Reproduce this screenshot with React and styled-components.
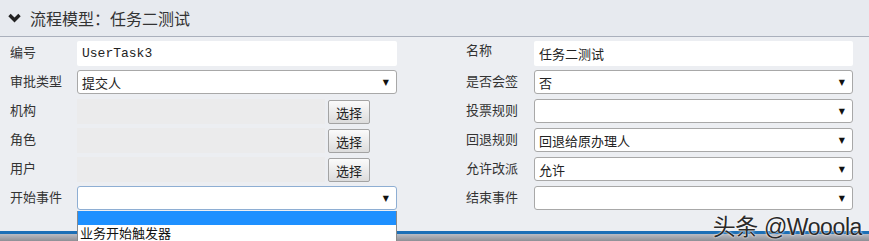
import React from "react";
import styled, { createGlobalStyle } from "styled-components";

const Global = createGlobalStyle`
  html, body { margin: 0; padding: 0; }
  body {
    background: #eceef2;
    font-family: "Noto Sans CJK SC", "Noto Sans", sans-serif;
    color: #222;
  }
`;

const Page = styled.div`
  position: relative;
  width: 869px;
  height: 241px;
  overflow: hidden;
  display: flex;
  flex-direction: column;
`;

const Header = styled.div`
  height: 37px;
  flex: none;
  box-sizing: border-box;
  background: #e7eaef;
  border-bottom: 1px solid #aab0bc;
  display: flex;
  align-items: center;
  padding-left: 8px;
  gap: 9px;
`;

const Title = styled.span`
  font-size: 16px;
  color: #333;
`;

const Body = styled.div`
  flex: 1;
  background: #eceef2;
  padding: 4px 16px 0 10px;
  display: grid;
  grid-template-columns: 387px 387px;
  column-gap: 69px;
  align-content: start;
`;

const Column = styled.div`
  display: flex;
  flex-direction: column;
  gap: 4px;
`;

const Row = styled.div`
  display: grid;
  grid-template-columns: ${(p) => p.$label}px 1fr;
  height: 25px;
  align-items: start;
  position: relative;
`;

const Label = styled.span`
  font-size: 13px;
  line-height: 16px;
  padding-top: ${(p) => p.$top ?? 3}px;
  color: #333;
`;

const TextInput = styled.div`
  height: 25px;
  box-sizing: border-box;
  background: #fff;
  border-radius: 2px;
  padding: 0 5px;
  display: flex;
  align-items: center;
  font-size: 13px;
  font-family: ${(p) => (p.$mono ? '"Liberation Mono", monospace' : '"Noto Sans CJK SC", sans-serif')};
  color: #222;
`;

const Select = styled.div`
  height: 24px;
  box-sizing: border-box;
  background: #fff;
  border: 1px solid ${(p) => (p.$focus ? "#8eaed3" : "#a8a8a8")};
  border-radius: 3px;
  padding: 0 7px 0 4px;
  display: flex;
  align-items: center;
  justify-content: space-between;
  font-size: 13px;
  color: #222;
`;

const Arrow = styled.span`
  font-size: 8px;
  color: #111;
  font-family: "DejaVu Sans", sans-serif;
`;

const PickerField = styled.div`
  display: flex;
  align-items: flex-start;
  gap: 3px;
`;

const Disabled = styled.div`
  width: 248px;
  height: 25px;
  background: #ebebec;
`;

const Button = styled.button`
  width: 42px;
  height: 24px;
  margin-top: 1px;
  box-sizing: border-box;
  border: 1px solid #a3a3a3;
  border-radius: 2px;
  background: linear-gradient(#fbfbfb, #dcdcdc);
  font-family: "Noto Sans CJK SC", sans-serif;
  font-size: 13px;
  color: #222;
  padding: 0;
`;

const Dropdown = styled.div`
  position: absolute;
  left: 67px;
  top: 25px;
  width: 320px;
  box-sizing: border-box;
  background: #fff;
  border: 1px solid #8a8a8a;
  border-top: none;
  z-index: 5;
`;

const Option = styled.div`
  height: ${(p) => p.$h}px;
  background: ${(p) => (p.$active ? "#1e90ff" : "#fff")};
  font-size: 13px;
  line-height: 15px;
  padding-left: 2px;
  color: #111;
`;

const Footer = styled.div`
  flex: none;
  height: 10px;
  display: flex;
  flex-direction: column;
`;

const BlueLine = styled.div`
  height: 3px;
  background: #1c6fb6;
`;

const Shade = styled.div`
  flex: 1;
  background: linear-gradient(#b9bcc4, #8e8f95);
`;

const Watermark = styled.span`
  position: absolute;
  right: 7px;
  bottom: 0px;
  font-size: 23px;
  line-height: 28px;
  letter-spacing: -0.4px;
  font-family: "Liberation Sans", "Noto Sans CJK SC", sans-serif;
  color: #2a2a2a;
  text-shadow: 0 0 2px #fff, 0 0 1px #fff;
  z-index: 6;
`;

const Chevron = () => (
  <svg width="13" height="10" viewBox="0 0 13 10">
    <polyline points="1.5,2 6.5,7 11.5,2" fill="none" stroke="#222" strokeWidth="3.4" />
  </svg>
);

function SelectBox({ value, focus }) {
  return (
    <Select $focus={focus}>
      <span>{value}</span>
      <Arrow>▼</Arrow>
    </Select>
  );
}

export default function App() {
  return (
    <>
      <Global />
      <Page>
        <Header>
          <Chevron />
          <Title>流程模型：任务二测试</Title>
        </Header>
        <Body>
          <Column>
            <Row $label={67}>
              <Label>编号</Label>
              <TextInput $mono>UserTask3</TextInput>
            </Row>
            <Row $label={67}>
              <Label>审批类型</Label>
              <SelectBox value="提交人" />
            </Row>
            <Row $label={67}>
              <Label>机构</Label>
              <PickerField>
                <Disabled />
                <Button>选择</Button>
              </PickerField>
            </Row>
            <Row $label={67}>
              <Label>角色</Label>
              <PickerField>
                <Disabled />
                <Button>选择</Button>
              </PickerField>
            </Row>
            <Row $label={67}>
              <Label>用户</Label>
              <PickerField>
                <Disabled />
                <Button>选择</Button>
              </PickerField>
            </Row>
            <Row $label={67}>
              <Label>开始事件</Label>
              <SelectBox value="" focus />
              <Dropdown>
                <Option $active $h={14} />
                <Option $h={20}>业务开始触发器</Option>
              </Dropdown>
            </Row>
          </Column>
          <Column>
            <Row $label={68}>
              <Label $top={1}>名称</Label>
              <TextInput>任务二测试</TextInput>
            </Row>
            <Row $label={68}>
              <Label>是否会签</Label>
              <SelectBox value="否" />
            </Row>
            <Row $label={68}>
              <Label>投票规则</Label>
              <SelectBox value="" />
            </Row>
            <Row $label={68}>
              <Label>回退规则</Label>
              <SelectBox value="回退给原办理人" />
            </Row>
            <Row $label={68}>
              <Label>允许改派</Label>
              <SelectBox value="允许" />
            </Row>
            <Row $label={68}>
              <Label>结束事件</Label>
              <SelectBox value="" />
            </Row>
          </Column>
        </Body>
        <Footer>
          <BlueLine />
          <Shade />
        </Footer>
        <Watermark>头条 @Wooola</Watermark>
      </Page>
    </>
  );
}
